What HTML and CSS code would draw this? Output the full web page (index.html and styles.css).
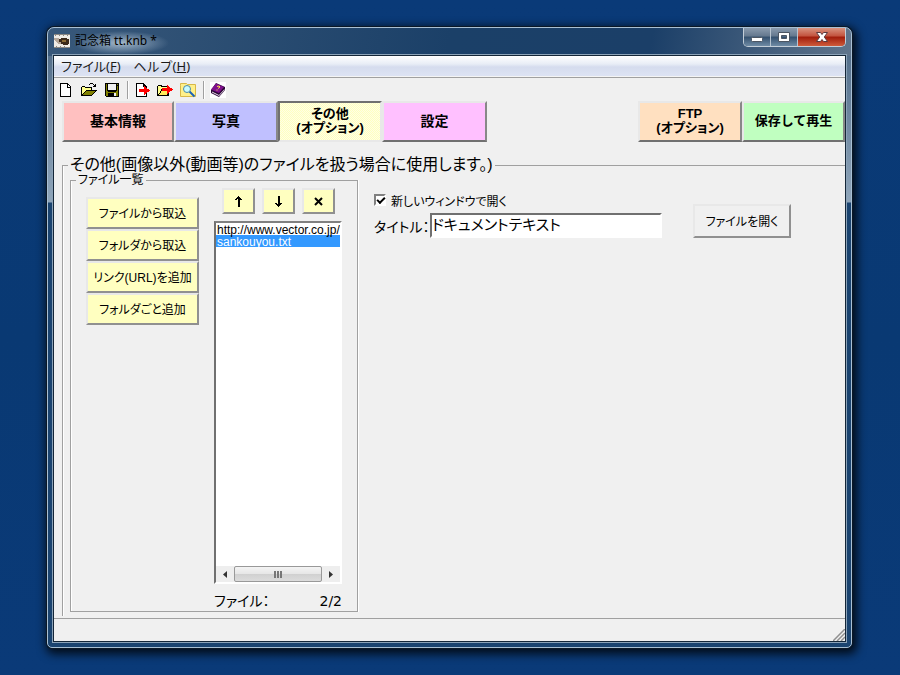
FILE: index.html
```html
<!DOCTYPE html>
<html lang="ja">
<head>
  <meta charset="UTF-8">
  <title>記念箱 tt.knb *</title>
  <meta name="viewport" content="width=device-width, initial-scale=1.0">
  <link rel="stylesheet" href="styles.css">
</head>
<body>

<div class="window">
  <header class="titlebar">
    <svg class="app-icon" width="16" height="16" viewBox="0 0 16 16" shape-rendering="crispEdges">
      <rect y="1" width="16" height="14" fill="#f0ece6"/>
      <path d="M0 1h16v1H0zM1 2h1v1H1zM5 2h1v1H5zM9 2h1v1H9zM13 2h1v1h-1zM0 14h16v1H0zM2 13h1v1H2zM6 13h1v1H6zM10 13h1v1h-1z" fill="#8a8782"/>
      <path d="M0 5h4l3 2v4H4L1 8z" fill="#b5a79a"/>
      <path d="M5 6h2V5h6v1h2v5h-1v1H9v-1H7V9H5z" fill="#3c2a1a"/>
      <path d="M8 7h4v2H8z" fill="#8a6a35"/>
    </svg>
    <h1 class="title">記念箱 tt.knb *</h1>
    <div class="caption-buttons">
      <button class="cap" aria-label="最小化">
        <svg width="14" height="12" viewBox="0 0 14 12"><rect x="1.500" y="6.500" width="11" height="4" rx="1" fill="#fff" stroke="#4c5663"/></svg>
      </button>
      <button class="cap" aria-label="最大化">
        <svg width="14" height="12" viewBox="0 0 14 12"><path d="M1.500 1.500h11v9h-11zM4.500 4.500v3h5v-3z" fill="#fff" fill-rule="evenodd" stroke="#4c5663"/></svg>
      </button>
      <button class="cap cap-close" aria-label="閉じる">
        <svg width="14" height="12" viewBox="0 0 14 12"><path d="M1.500 1.500h4L7 3.500l1.500-2h4L9.300 6l3.200 4.500h-4L7 8.500l-1.500 2h-4L4.700 6z" fill="#fff" stroke="#5a3a3e"/></svg>
      </button>
    </div>
  </header>

  <div class="client">
    <nav class="menubar">
      <a href="#file">ファイル(<u>F</u>)</a>
      <a href="#help">ヘルプ(<u>H</u>)</a>
    </nav>

    <div class="toolbar">
      <button class="tool" aria-label="新規">
        <svg width="16" height="16" viewBox="0 0 16 16" shape-rendering="crispEdges">
          <path d="M2 1h8v1h1v1h1v1h1v11H2z" fill="#000"/>
          <path d="M3 2h6v4h3v8H3z" fill="#fff"/><path d="M10 3h1v1h1v1h-2z" fill="#fff"/>
        </svg>
      </button>
      <button class="tool" aria-label="開く">
        <svg width="16" height="16" viewBox="0 0 16 16" shape-rendering="crispEdges">
          <path d="M9 1h3v1H9zM8 2h1v1H8zM12 2h1v1h-1zM14 2h1v3h-3V4h1V3h1z" fill="#000"/>
          <path d="M1 4h3v1h7v3h5v1h-1v1h-1v1h-1v1h-1v1h-1v1H0V5h1z" fill="#000"/>
          <path d="M1 5h3v1h6v2H5v1H4v1H3v1H2v1H1z" fill="#ffff8c"/>
          <path d="M5 9h9v1h-1v1h-1v1h-1v1H2v-1h1v-1h1v-1h1z" fill="#808000"/>
        </svg>
      </button>
      <button class="tool" aria-label="保存">
        <svg width="16" height="16" viewBox="0 0 16 16" shape-rendering="crispEdges">
          <path d="M1 1h14v14H2v-1H1z" fill="#000"/>
          <path d="M2 2h1v7h1v1h8V9h1V4h1v10H2zM13 2h1v1h-1z" fill="#808000"/>
          <path d="M4 2h8v6H4z" fill="#efefef"/><path d="M10 11h2v3h-2z" fill="#efefef"/>
          <path d="M4 11h6v3H4z" fill="#000"/>
        </svg>
      </button>
      <span class="tool-sep"></span>
      <button class="tool" aria-label="書き出し">
        <svg width="16" height="16" viewBox="0 0 16 16" shape-rendering="crispEdges">
          <path d="M2 1h8v1h1v1h1v1h1v11H2z" fill="#000"/>
          <path d="M3 2h6v3h3v9H3z" fill="#fff"/>
          <path d="M5 7h5V4h1v1h1v1h1v1h2v1h1v1h-1v1h-2v1h-1v1h-1v1h-1v-3H5z" fill="#f00"/>
        </svg>
      </button>
      <button class="tool" aria-label="フォルダへ書き出し">
        <svg width="16" height="16" viewBox="0 0 16 16" shape-rendering="crispEdges">
          <path d="M1 3h4v1h7v10H0V4h1z" fill="#000"/>
          <path d="M1 4h3v1h6v2H4v2H3v2H2v1H1z" fill="#ffff8c"/>
          <path d="M5 8h7v2h-1v2h-1v1H2v-1h1v-1h1V9h1z" fill="#ffe95a"/>
          <path d="M5 6h5V3h1v1h1v1h1v1h2v1h1v1h-1v1h-2v1h-1v1h-1v1h-1V9H5z" fill="#f00"/>
        </svg>
      </button>
      <button class="tool" aria-label="検索">
        <svg width="16" height="16" viewBox="0 0 16 16">
          <path d="M.5 3.500v-2h6l1 1h8v12H.5z" fill="#fff08a" stroke="#d8b848"/>
          <path d="M9.500 9.500l5 5" stroke="#1c62b8" stroke-width="2"/>
          <circle cx="7" cy="7" r="3.500" fill="#c8fbff" stroke="#4c8aa8"/>
        </svg>
      </button>
      <span class="tool-sep"></span>
      <button class="tool" aria-label="ヘルプ">
        <svg width="16" height="16" viewBox="0 0 16 16">
          <path d="M0 0h16v16H0z" fill="#fff"/>
          <path d="M6 1l9 4v3l-6 7-8-4V8z" fill="#2c0638"/>
          <path d="M6 1.500l8 3.500-5 6-8-3.500z" fill="#80108c"/>
          <path d="M2 9.500l7 3.500 5.500-6v1L9 14l-7-3.500z" fill="#e8e0ea"/>
          <path d="M7 4.500l2-.5 1 1-2 1.500M7 7.500v1" fill="none" stroke="#ffe14a"/>
        </svg>
      </button>
    </div>

    <div class="tabs">
      <button class="tab tab-basic">基本情報</button>
      <button class="tab tab-photo">写真</button>
      <button class="tab tab-other" aria-pressed="true">その他<br>(オプション)</button>
      <button class="tab tab-config">設定</button>
      <button class="tab tab-ftp">FTP<br>(オプション)</button>
      <button class="tab tab-save">保存して再生</button>
    </div>

    <fieldset class="panel">
      <legend>その他(画像以外(動画等)のファイルを扱う場合に使用します。)</legend>
      <div class="panel-body">

        <fieldset class="files">
          <legend>ファイル一覧</legend>
          <div class="files-body">
            <div class="import-buttons">
              <button>ファイルから取込</button>
              <button>フォルダから取込</button>
              <button>リンク(URL)を追加</button>
              <button>フォルダごと追加</button>
            </div>

            <div class="list-column">
              <div class="order-buttons">
                <button aria-label="上へ"><svg width="9" height="11" viewBox="0 0 9 11" shape-rendering="crispEdges"><path d="M4 0h1v1h1v1h1v1h1v1H6V3v8H4V3H3v1H1V3h1V2h1V1h1z"/></svg></button>
                <button aria-label="下へ"><svg width="9" height="11" viewBox="0 0 9 11" shape-rendering="crispEdges"><path d="M4 11h1v-1h1V9h1V8h1V7H6v1V0H4v8H3V7H1v1h1v1h1v1h1z"/></svg></button>
                <button aria-label="削除"><svg width="9" height="9" viewBox="0 0 9 9"><path d="M1 1l7 7M8 1L1 8" stroke="#000" stroke-width="2"/></svg></button>
              </div>
              <div class="listbox">
                <select size="4" aria-label="ファイル一覧">
                  <option>http://www.vector.co.jp/</option>
                  <option selected>sankouyou.txt</option>
                </select>
                <div class="hscroll">
                  <button aria-label="左へ"><svg width="4" height="7" viewBox="0 0 4 7"><path d="M4 0v7L0 3.500z" fill="#333"/></svg></button>
                  <span class="thumb"><i></i><i></i><i></i></span>
                  <button aria-label="右へ"><svg width="4" height="7" viewBox="0 0 4 7"><path d="M0 0v7l4-3.500z" fill="#333"/></svg></button>
                </div>
              </div>
              <div class="count"><span>ファイル：</span><span>2/2</span></div>
            </div>
          </div>
        </fieldset>

        <div class="detail">
          <div class="fields">
            <label class="check"><input type="checkbox" checked>新しいウィンドウで開く</label>
            <div class="title-row">
              <label for="doc-title">タイトル：</label>
              <input type="text" id="doc-title" value="ドキュメントテキスト">
            </div>
          </div>
          <button class="open-file">ファイルを開く</button>
        </div>

      </div>
    </fieldset>

    <footer class="statusbar">
      <svg width="12" height="12" viewBox="0 0 12 12"><path d="M0 12L12 0M4 12l8-8M8 12l4-4" stroke="#909090" stroke-width="1.500"/></svg>
    </footer>
  </div>
</div>

</body>
</html>
```

FILE: styles.css
```css
* {
  box-sizing: border-box;
}
body {
  margin: 0;
  padding: 27px 48px 27px 47px;
  min-height: 100vh;
  display: flex;
  background: linear-gradient(#0a3a78, #093973 50%, #0a3a78);
  font-family: "Liberation Sans", "Noto Sans CJK JP", sans-serif;
  font-size: 12px;
  color: #000;
}
button,
input,
select {
  font: inherit;
  color: inherit;
  margin: 0;
  padding: 0;
}
button {
  background: none;
  border: none;
}
svg {
  display: block;
}

/* window frame */
.window {
  flex: 1;
  display: flex;
  flex-direction: column;
  padding: 0 5px 5px;
  border: 1px solid #a9c0d4;
  border-radius: 7px 7px 5px 5px;
  background: linear-gradient(100deg, #38587a, #1b4068 50%, #1b3f68 75%, #60758c) top / 100% 28px no-repeat,
    linear-gradient(#4a6683, #8fa5ba 174px, #1b4470 175px);
  box-shadow: 0 0 0 1px #0b1826, 2px 3px 10px 3px rgba(0, 0, 0, 0.8);
}
.titlebar {
  display: flex;
  height: 27px;
}
.app-icon {
  margin: 5px 3px 0 1px;
}
.title {
  margin: 3px 0 0;
  padding: 0 12px 0 2px;
  font-size: 12px;
  font-weight: normal;
  line-height: 20px;
  font-family: "Noto Sans", "Noto Sans CJK JP", sans-serif;
  background: radial-gradient(closest-side, rgba(200, 216, 230, 0.75), rgba(190, 208, 224, 0));
}
.caption-buttons {
  display: flex;
  height: 19px;
  margin-left: auto;
  border: 1px solid #c3ced8;
  border-top: none;
  border-radius: 0 0 5px 5px;
  overflow: hidden;
}
.cap {
  width: 27px;
  display: flex;
  align-items: center;
  justify-content: center;
  border-right: 1px solid #b7c4d0;
  background: linear-gradient(#8a9bae, #64788e 45%, #33506e 50%, #6f8ba5);
}
.cap-close {
  width: 47px;
  border-right: none;
  background: linear-gradient(#d9937f, #c2523d 45%, #a01c0a 50%, #cf5b3b);
}

.client {
  flex: 1;
  display: flex;
  flex-direction: column;
  border: 1px solid #142638;
  background: #f0f0f0;
  outline: 1px solid #8ca3b8;
  overflow: hidden;
}

/* menu and toolbar */
.menubar {
  display: flex;
  gap: 13px;
  height: 21px;
  padding: 0 7px;
  background: linear-gradient(#fff, #e8edf6 40%, #d5dcee 55%, #dde3f3);
  border-bottom: 1px solid #f4f4f4;
}
.menubar a {
  color: #1a1a1a;
  text-decoration: none;
  font-size: 13px;
  line-height: 20px;
  font-family: "Noto Sans", "Noto Sans CJK JP", sans-serif;
}
.menubar a:first-child {
  font-feature-settings: "palt";
}
.toolbar {
  display: flex;
  align-items: center;
  gap: 7px;
  height: 24px;
  padding: 0 4px;
  border-top: 1px solid #a0a0a0;
}
.tool {
  width: 16px;
  height: 16px;
}
.tool-sep {
  width: 2px;
  height: 18px;
  border-left: 1px solid #a0a0a0;
  border-right: 1px solid #fff;
}
.tool-sep + .tool {
  margin-left: -2px;
}

/* tab buttons */
.tabs {
  display: flex;
  height: 41px;
  margin: 0 0 14px 8px;
}
.tab {
  width: 104px;
  padding-bottom: 1px;
  border: 2px solid;
  border-color: #e8e8e8 #888 #707070 #e8e8e8;
  font-size: 14px;
  font-weight: bold;
  line-height: 14px;
  font-feature-settings: "palt";
}
.tab-basic {
  width: 112px;
  background: #ffc0c0;
}
.tab-photo {
  background: #c0c0ff;
}
.tab-other,
.tab-ftp {
  font-size: 13px;
}
.tab-other {
  border-color: #707070 #e8e8e8 #e8e8e8 #707070;
  background: repeating-conic-gradient(#ffffc0 0 25%, #ffffe4 0 50%) 0 0 / 2px 2px;
}
.tab-config {
  width: 105px;
  background: #ffc0ff;
}
.tab-ftp {
  margin-left: auto;
  background: #ffe0c0;
}
.tab-save {
  width: 103px;
  font-size: 13px;
  font-feature-settings: normal;
  background: #c0ffc0;
}

/* group boxes */
fieldset {
  min-width: 0;
  margin: 0;
  padding: 0;
  border: 1px solid #a0a0a0;
  box-shadow: 1px 0 #fff, inset 1px 0 #fff;
}
.panel {
  flex: 1;
  display: flex;
  flex-direction: column;
  margin: 0 0 2px 8px;
  border-width: 1px 0 0 1px;
}
.panel > legend {
  margin-left: 5px;
  padding: 0 2px;
  font-size: 16px;
  line-height: 18px;
  font-feature-settings: "palt";
}
.panel-body {
  display: flex;
  height: 100%;
  padding: 0 0 4px 7px;
}
.files {
  flex: none;
  width: 288px;
  margin-top: -1px;
}
.files > legend {
  margin-left: 5px;
  padding: 0 2px;
  font-size: 12px;
  line-height: 14px;
  font-feature-settings: "palt";
}
.files-body {
  display: flex;
  gap: 15px;
  height: 100%;
  padding: 1px 15px 0;
}
.import-buttons {
  width: 113px;
  padding-top: 9px;
}
.import-buttons button {
  display: block;
  width: 100%;
  height: 32px;
}
.import-buttons button,
.order-buttons button,
.open-file {
  padding-bottom: 2px;
  background: #ffffc0;
  border: 2px solid;
  border-color: #e8e8e8 #909090 #909090 #e8e8e8;
  font-feature-settings: "palt";
}
.list-column {
  flex: 1;
  display: flex;
  flex-direction: column;
}
.order-buttons {
  display: flex;
  gap: 7px;
  margin: 0 0 7px 8px;
}
.order-buttons button {
  display: flex;
  align-items: center;
  justify-content: center;
  width: 33px;
  height: 26px;
  padding: 0;
}
.listbox {
  flex: 1;
  display: flex;
  flex-direction: column;
  border: 2px solid;
  border-color: #808080 #fff #fff #707070;
  background: #fff;
}
.listbox select {
  flex: 1;
  width: 100%;
  border: none;
  outline: none;
  background: #fff;
  overflow: hidden;
}
.listbox option {
  height: 12px;
  min-height: 12px;
  padding: 0 1px;
  line-height: 12px;
}
.listbox option:checked {
  background: linear-gradient(#39f, #39f);
  -webkit-text-fill-color: #fff;
}
.hscroll {
  display: flex;
  height: 16px;
  background: #eee;
}
.hscroll button {
  width: 18px;
  display: flex;
  align-items: center;
  justify-content: center;
}
.thumb {
  flex: none;
  width: 88px;
  display: flex;
  gap: 1px;
  align-items: center;
  justify-content: center;
  border: 1px solid #999;
  border-radius: 2px;
  background: linear-gradient(#f4f4f4, #e6e6e6 50%, #d0d0d0 50%, #dcdcdc);
}
.thumb i {
  width: 2px;
  height: 7px;
  background: #777;
}
.count {
  display: flex;
  justify-content: space-between;
  height: 27px;
  padding-top: 8px;
  font-family: "DejaVu Sans", "Noto Sans CJK JP", sans-serif;
  font-size: 14px;
  line-height: 18px;
  font-feature-settings: "palt";
}

/* selected file */
.detail {
  flex: 1;
  display: flex;
  align-items: flex-start;
  gap: 31px;
  padding: 18px 16px;
}
.check {
  display: flex;
  align-items: center;
  gap: 5px;
  height: 16px;
  font-feature-settings: "palt";
}
.check input {
  appearance: none;
  width: 12px;
  height: 12px;
  border: 2px solid;
  border-color: #808080 #fff #fff #808080;
  background: #fff;
}
.check input:checked::before {
  content: "";
  display: block;
  width: 6px;
  height: 3px;
  margin: 1px;
  border: solid #000;
  border-width: 0 0 2px 2px;
  transform: rotate(-45deg);
}
.title-row {
  display: flex;
  align-items: center;
  gap: 2px;
  margin-top: 5px;
  font-size: 14px;
}
.title-row label {
  width: 54px;
  white-space: nowrap;
  font-feature-settings: "palt";
}
.title-row input {
  width: 232px;
  height: 25px;
  padding-bottom: 4px;
  border: 2px solid;
  border-color: #707070 #fff #fff #707070;
  background: #fff;
  font-size: 15px;
  font-feature-settings: "palt";
}
.open-file {
  width: 98px;
  height: 34px;
  margin-top: 12px;
  background: #f0f0f0;
}

.statusbar {
  display: flex;
  justify-content: flex-end;
  align-items: flex-end;
  height: 23px;
  border-top: 1px solid #a0a0a0;
}
```
